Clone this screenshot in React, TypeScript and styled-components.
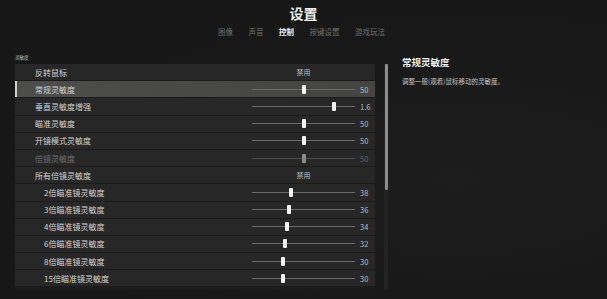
import React from 'react';
import styled, { createGlobalStyle } from 'styled-components';

const GlobalStyle = createGlobalStyle`
  html, body {
    margin: 0;
    padding: 0;
    background: #171717;
  }
  body {
    font-family: "Noto Sans CJK SC", "Noto Sans", sans-serif;
    color: #d0d0d0;
  }
`;

const Page = styled.div`
  width: 607px;
  height: 299px;
  overflow: hidden;
  background: radial-gradient(ellipse at 75% 60%, #1d1d1d 0%, #171717 70%);
`;

const Header = styled.div`
  display: flex;
  flex-direction: column;
  align-items: center;
  padding-top: 3px;
`;

const Title = styled.div`
  font-size: 14px;
  font-weight: 700;
  color: #f0f0f0;
  line-height: 20px;
`;

const Tabs = styled.div`
  display: flex;
  gap: 15.5px;
  margin-top: 2px;
  margin-left: -4px;
`;

const Tab = styled.div<{ $active?: boolean }>`
  font-size: 7.5px;
  line-height: 14px;
  color: ${({ $active }) => ($active ? '#f2f2f2' : '#6e6e6e')};
  font-weight: ${({ $active }) => ($active ? 700 : 400)};
`;

const Body = styled.div`
  display: grid;
  grid-template-columns: 360px 9px 1fr;
  column-gap: 9px;
  padding-left: 15px;
  margin-top: 16px;
`;

const SectionTag = styled.div`
  grid-column: 1 / -1;
  height: 5px;
  font-size: 4.5px;
  line-height: 5px;
  color: #cfcfcf;
  margin-bottom: 4px;
`;

const List = styled.div`
  display: flex;
  flex-direction: column;
  gap: 1px;
  background: #1b1b1b;
`;

const Row = styled.div<{ $active?: boolean; $indent?: boolean; $dim?: boolean }>`
  display: grid;
  grid-template-columns: 1fr 103px 15px;
  column-gap: 5px;
  align-items: center;
  height: 16.2px;
  padding-left: ${({ $indent }) => ($indent ? '29px' : '20px')};
  background: ${({ $active }) =>
    $active ? 'linear-gradient(90deg, #4d4d4b, #444443)' : '#272727'};
  box-shadow: ${({ $active }) => ($active ? 'inset 2px 0 0 #cfcfcf' : 'none')};
  font-size: 8px;
  color: ${({ $dim }) => ($dim ? '#6f6f6f' : '#d4d4d4')};
`;

const Label = styled.span`
  white-space: nowrap;
`;

const Toggle = styled.span`
  text-align: center;
  font-size: 7px;
  color: #bdbdbd;
`;

const Track = styled.div<{ $dim?: boolean }>`
  position: relative;
  height: 1px;
  background: ${({ $dim }) => ($dim ? '#4a4a4a' : '#6a6a6a')};
`;

const Thumb = styled.div<{ $dim?: boolean }>`
  position: absolute;
  top: -4px;
  width: 4px;
  height: 9px;
  margin-left: -2px;
  border-radius: 1px;
  background: ${({ $dim }) => ($dim ? '#8a8a8a' : '#f4f4f4')};
`;

const Value = styled.span<{ $dim?: boolean }>`
  font-size: 7.5px;
  color: ${({ $dim }) => ($dim ? '#666' : '#bcbcbc')};
`;

const ScrollTrack = styled.div`
  width: 4px;
  height: 226px;
  background: #232323;
  display: flex;
  flex-direction: column;
`;

const ScrollThumb = styled.div`
  width: 3px;
  height: 126px;
  margin-left: 0.5px;
  background: #8d8d8d;
  border-radius: 1px;
`;

const Detail = styled.div`
  display: flex;
  flex-direction: column;
  gap: 7px;
  margin-top: -9px;
`;

const DetailTitle = styled.div`
  font-size: 9.5px;
  font-weight: 700;
  color: #f0f0f0;
`;

const DetailText = styled.div`
  font-size: 6.5px;
  color: #c8c8c8;
`;

type Item = {
  label: string;
  toggle?: string;
  value?: number;
  max?: number;
  text?: string;
  active?: boolean;
  indent?: boolean;
  dim?: boolean;
};

const items: Item[] = [
  { label: '反转鼠标', toggle: '禁用' },
  { label: '常规灵敏度', value: 50, max: 100, text: '50', active: true },
  { label: '垂直灵敏度增强', value: 1.6, max: 2, text: '1.6' },
  { label: '瞄准灵敏度', value: 50, max: 100, text: '50' },
  { label: '开镜模式灵敏度', value: 50, max: 100, text: '50' },
  { label: '倍镜灵敏度', value: 50, max: 100, text: '50', dim: true },
  { label: '所有倍镜灵敏度', toggle: '禁用' },
  { label: '2倍瞄准镜灵敏度', value: 38, max: 100, text: '38', indent: true },
  { label: '3倍瞄准镜灵敏度', value: 36, max: 100, text: '36', indent: true },
  { label: '4倍瞄准镜灵敏度', value: 34, max: 100, text: '34', indent: true },
  { label: '6倍瞄准镜灵敏度', value: 32, max: 100, text: '32', indent: true },
  { label: '8倍瞄准镜灵敏度', value: 30, max: 100, text: '30', indent: true },
  { label: '15倍瞄准镜灵敏度', value: 30, max: 100, text: '30', indent: true },
];

const tabs = ['图像', '声音', '控制', '按键设置', '游戏玩法'];

export default function App() {
  return (
    <Page>
      <GlobalStyle />
      <Header>
        <Title>设置</Title>
        <Tabs>
          {tabs.map((t) => (
            <Tab key={t} $active={t === '控制'}>
              {t}
            </Tab>
          ))}
        </Tabs>
      </Header>
      <Body>
        <SectionTag>灵敏度</SectionTag>
        <List>
          {items.map((it) => (
            <Row key={it.label} $active={it.active} $indent={it.indent} $dim={it.dim}>
              <Label>{it.label}</Label>
              {it.toggle ? (
                <Toggle>{it.toggle}</Toggle>
              ) : (
                <Track $dim={it.dim}>
                  <Thumb
                    $dim={it.dim}
                    style={{ left: `${((it.value ?? 0) / (it.max ?? 100)) * 100}%` }}
                  />
                </Track>
              )}
              <Value $dim={it.dim}>{it.text}</Value>
            </Row>
          ))}
        </List>
        <ScrollTrack>
          <ScrollThumb />
        </ScrollTrack>
        <Detail>
          <DetailTitle>常规灵敏度</DetailTitle>
          <DetailText>调整一般(观看)鼠标移动的灵敏度。</DetailText>
        </Detail>
      </Body>
    </Page>
  );
}
